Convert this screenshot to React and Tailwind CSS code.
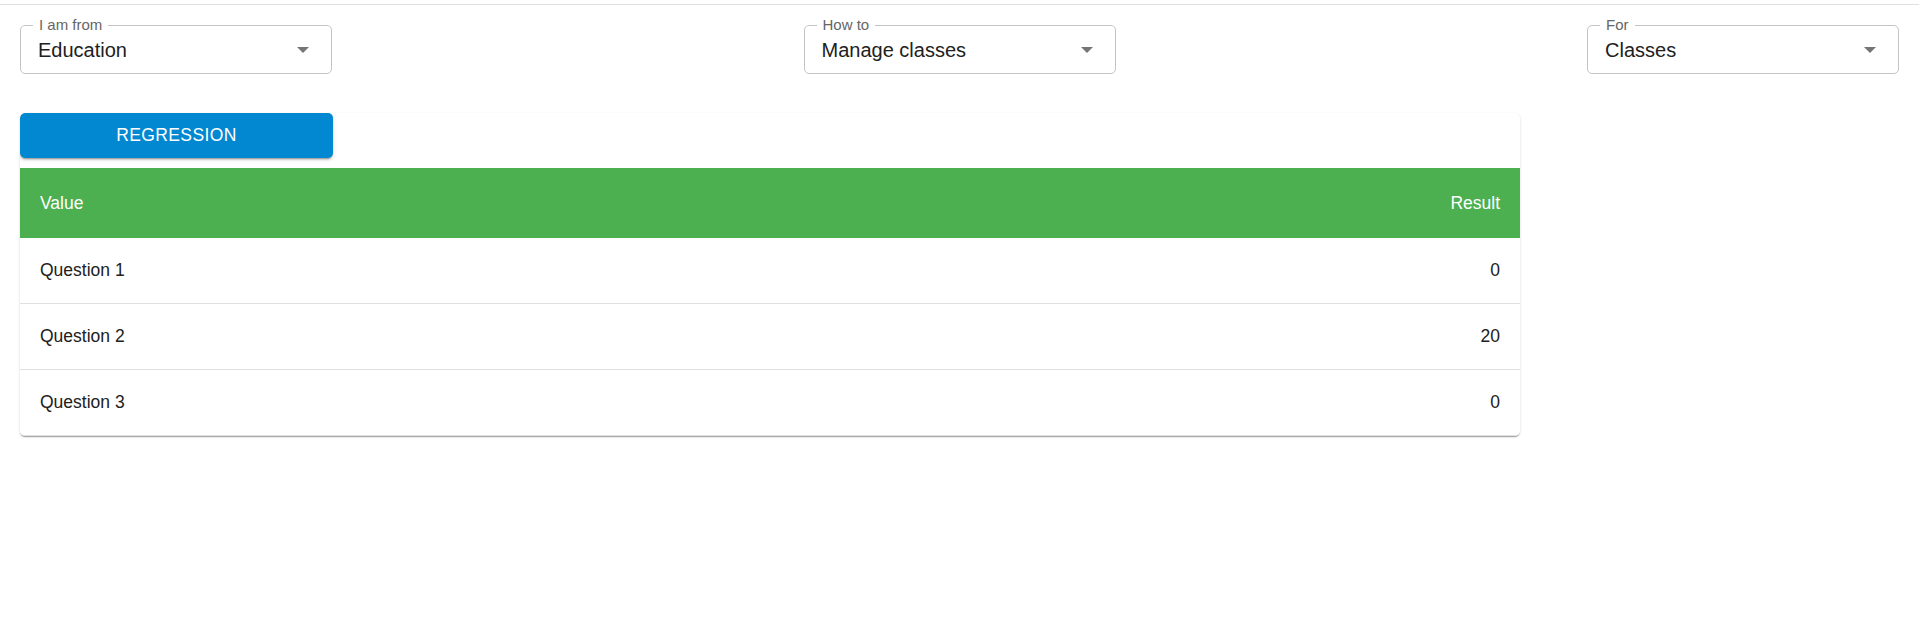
import React from "react";

function Arrow() {
  return (
    <svg width="12" height="6" viewBox="0 0 12 6" className="shrink-0">
      <path d="M0 0 L12 0 L6 6 Z" fill="#757575" />
    </svg>
  );
}

function Select({ label, value }) {
  return (
    <div className="relative w-[312px] h-[49px] border border-[#c4c4c4] rounded-[5px] flex items-center justify-between pl-[17px] pr-[22px]">
      <span className="absolute -top-[9px] left-[12px] px-[6px] bg-white text-[15px] leading-none text-[#666666]">
        {label}
      </span>
      <span className="text-[20px] leading-none text-[#212121] pt-[1px]">{value}</span>
      <Arrow />
    </div>
  );
}

const rows = [
  ["Question 1", "0"],
  ["Question 2", "20"],
  ["Question 3", "0"],
];

export default function App() {
  return (
    <div className="w-[1919px] h-[632px] bg-white font-['Liberation_Sans',Arial,sans-serif] pt-[4px]">
      <div className="border-t border-[#e0e0e0]" />
      <div className="px-[20px] pt-[20px] flex justify-between">
        <Select label="I am from" value="Education" />
        <Select label="How to" value="Manage classes" />
        <Select label="For" value="Classes" />
      </div>
      <div className="mx-[20px] mt-[39px] w-[1500px] rounded-[5px] overflow-hidden bg-white shadow-[0_2px_1px_-1px_rgba(0,0,0,0.2),0_1px_1px_0_rgba(0,0,0,0.14),0_1px_3px_0_rgba(0,0,0,0.12)]">
        <button className="w-[313px] h-[45px] bg-[#0288d1] rounded-[5px] text-white text-[17.5px] uppercase tracking-[0.4px] flex items-center justify-center shadow-[0_3px_1px_-2px_rgba(0,0,0,0.2),0_2px_2px_0_rgba(0,0,0,0.14),0_1px_5px_0_rgba(0,0,0,0.12)]">
          Regression
        </button>
        <div className="mt-[10px]">
          <div className="h-[70px] bg-[#4caf50] flex items-center justify-between px-[20px] text-white text-[17.5px]">
            <span>Value</span>
            <span>Result</span>
          </div>
          {rows.map(([q, v]) => (
            <div
              key={q}
              className="h-[66px] border-b border-[#e0e0e0] flex items-center justify-between px-[20px] text-[#212121] text-[17.5px]"
            >
              <span>{q}</span>
              <span>{v}</span>
            </div>
          ))}
        </div>
      </div>
    </div>
  );
}
